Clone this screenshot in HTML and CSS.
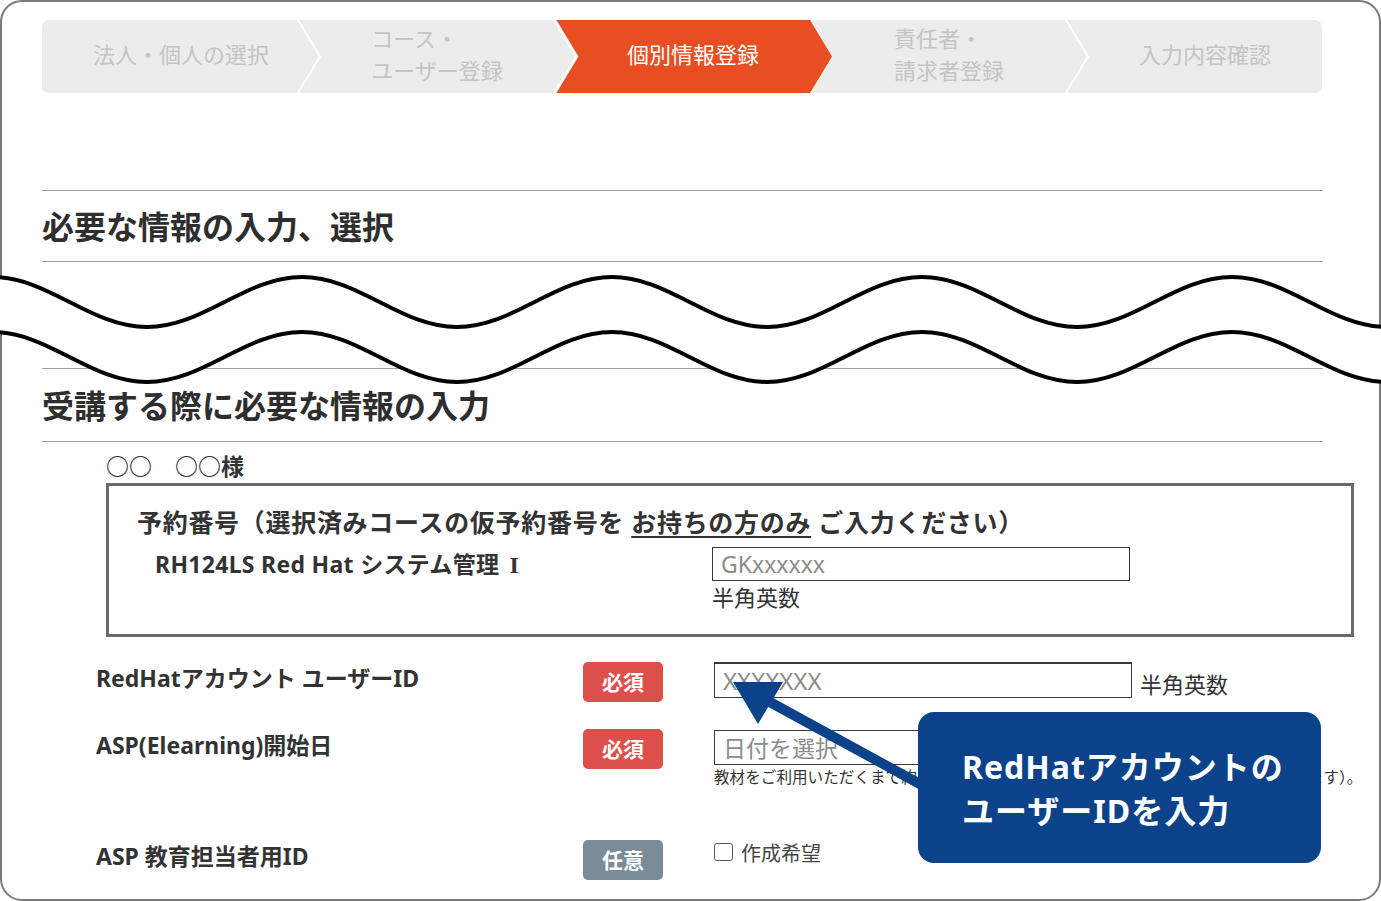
FILE: index.html
```html
<!DOCTYPE html>
<html lang="ja">
<head>
<meta charset="utf-8">
<title>個別情報登録</title>
<link rel="stylesheet" href="styles.css">
</head>
<body>
<div class="frame">
  <nav class="steps">
    <div class="step"><span class="step-label">法人・個人の選択</span></div>
    <div class="step">
      <svg class="sep" width="26" height="73" viewBox="0 0 26 73"><polyline points="1,0 23,36.5 1,73"/></svg>
      <span class="step-label two">コース・<br>ユーザー登録</span>
    </div>
    <div class="step active">
      <svg class="sep" width="26" height="73" viewBox="0 0 26 73"><polyline points="1,0 23,36.5 1,73"/></svg>
      <svg class="step-bg" width="280" height="73" viewBox="0 0 280 73"><polygon points="2.5,0 256,0 278,36.5 256,73 2.5,73 24.5,36.5"/></svg>
      <span class="step-label">個別情報登録</span>
    </div>
    <div class="step"><span class="step-label two">責任者・<br>請求者登録</span></div>
    <div class="step">
      <svg class="sep" width="26" height="73" viewBox="0 0 26 73"><polyline points="1,0 23,36.5 1,73"/></svg>
      <span class="step-label">入力内容確認</span>
    </div>
  </nav>

  <h2 class="sec-head">必要な情報の入力、選択</h2>
  <div class="omitted"></div>
  <h2 class="sec-head sec-second">受講する際に必要な情報の入力</h2>

  <p class="greeting">○○　○○様</p>

  <div class="resv-box">
    <p class="resv-title">予約番号（選択済みコースの仮予約番号を <span class="uline">お持ちの方のみ</span> ご入力ください）</p>
    <div class="resv-row">
      <div class="resv-course">RH124LS Red Hat システム管理 <span class="roman">I</span></div>
      <div class="resv-field">
        <input class="text-input" type="text" placeholder="GKxxxxxx">
        <div class="note">半角英数</div>
      </div>
    </div>
  </div>

  <div class="form-rows">
    <div class="form-row row-account">
      <div class="label">RedHatアカウント ユーザーID</div>
      <span class="badge req">必須</span>
      <div class="field field-inline">
        <input class="text-input row-input" type="text" placeholder="XXXXXXX">
        <span class="note side">半角英数</span>
      </div>
    </div>
    <div class="form-row row-date">
      <div class="label">ASP(Elearning)開始日</div>
      <span class="badge req">必須</span>
      <div class="field">
        <input class="text-input row-input date-input" type="text" placeholder="日付を選択">
        <div class="help">教材をご利用いただくまで約1週間かかります（開始日は申込日の1週間後以降となります）。</div>
      </div>
    </div>
    <div class="form-row row-admin">
      <div class="label">ASP 教育担当者用ID</div>
      <span class="badge opt">任意</span>
      <label class="field check">
        <input class="checkbox" type="checkbox">
        <span>作成希望</span>
      </label>
    </div>
  </div>

  <svg class="waves" width="1381" height="130" viewBox="0 260 1381 130">
    <path class="band" d="M -163 327 C -106 327 -65 277 -8 277 S 90 327 147 327 S 245 277 302 277 S 400 327 457 327 S 555 277 612 277 S 710 327 767 327 S 865 277 922 277 S 1020 327 1077 327 S 1175 277 1232 277 S 1330 327 1387 327 S 1485 277 1542 277 L 1542 332 C 1485 332 1444 382 1387 382 S 1289 332 1232 332 S 1134 382 1077 382 S 979 332 922 332 S 824 382 767 382 S 669 332 612 332 S 514 382 457 382 S 359 332 302 332 S 204 382 147 382 S 49 332 -8 332 S -106 382 -163 382 Z"/>
    <path class="wave" d="M -163 327 C -106 327 -65 277 -8 277 S 90 327 147 327 S 245 277 302 277 S 400 327 457 327 S 555 277 612 277 S 710 327 767 327 S 865 277 922 277 S 1020 327 1077 327 S 1175 277 1232 277 S 1330 327 1387 327 S 1485 277 1542 277"/>
    <path class="wave" d="M -163 382 C -106 382 -65 332 -8 332 S 90 382 147 382 S 245 332 302 332 S 400 382 457 382 S 555 332 612 332 S 710 382 767 382 S 865 332 922 332 S 1020 382 1077 382 S 1175 332 1232 332 S 1330 382 1387 382 S 1485 332 1542 332"/>
  </svg>

  <svg class="pointer" width="240" height="150" viewBox="700 660 240 150">
    <line x1="768" y1="701" x2="940" y2="795"/>
    <polygon points="733,682 783,682 758,724"/>
  </svg>

  <div class="callout">RedHatアカウントの<br>ユーザーIDを入力</div>
</div>
</body>
</html>
```

FILE: styles.css
```css
* { box-sizing: border-box; }

html, body {
  margin: 0;
  padding: 0;
  background: #fff;
}

body {
  font-family: "Noto Sans", "Noto Sans CJK JP", sans-serif;
  color: #333;
}

.frame {
  position: relative;
  width: 1381px;
  height: 901px;
  border: 2px solid #7a7a7a;
  border-radius: 22px;
  padding: 18px 0 0 40px;
  background: #fff;
}

/* ---------- steps ---------- */
.steps {
  display: flex;
  width: 1280px;
  height: 73px;
  background: #ececec;
  border-radius: 7px;
}

.step {
  position: relative;
  width: 256px;
  height: 73px;
  padding-left: 22px;
  padding-bottom: 7px;
  display: flex;
  align-items: center;
  justify-content: center;
}

.step-label {
  position: relative;
  z-index: 1;
  font-family: "Noto Sans CJK JP", sans-serif;
  font-size: 22px;
  line-height: 32px;
  color: #c4c4c4;
  white-space: nowrap;
}

.step-label.two {
  text-align: left;
  padding-top: 0;
}

.step.active .step-label { color: #fff; }

.sep {
  position: absolute;
  left: -1px;
  top: 0;
}

.sep polyline {
  fill: none;
  stroke: #fff;
  stroke-width: 2;
}

.step-bg {
  position: absolute;
  left: 0;
  top: 0;
  overflow: visible;
}

.step-bg polygon { fill: #e94e22; }

/* ---------- section headings ---------- */
.sec-head {
  margin: 97px 0 0;
  width: 1281px;
  height: 72px;
  border-top: 1px solid #a0a0a0;
  border-bottom: 1px solid #a0a0a0;
  display: flex;
  align-items: center;
  padding-top: 0;
  padding-bottom: 2px;
  font-family: "Noto Sans CJK JP", sans-serif;
  font-size: 32px;
  font-weight: 700;
  color: #2e2e2e;
  letter-spacing: 0;
}

.sec-second {
  margin-top: 0;
  height: 74px;
}

.omitted { height: 106px; }

.greeting {
  margin: 0 0 0 64px;
  height: 41px;
  padding-top: 8px;
  font-family: "Noto Sans CJK JP", sans-serif;
  font-size: 23px;
  line-height: 30px;
  font-weight: 700;
  color: #333;
}

/* ---------- reservation box ---------- */
.resv-box {
  margin-left: 64px;
  width: 1248px;
  height: 154px;
  border: 3px solid #6a6a6a;
  padding: 19px 0 0 28px;
}

.resv-title {
  margin: 0;
  font-size: 25px;
  line-height: 34px;
  font-weight: 700;
  color: #333;
  white-space: nowrap;
  letter-spacing: 0.7px;
}

.uline {
  text-decoration: underline;
  text-decoration-thickness: 2px;
  text-underline-offset: 4px;
}

.resv-row {
  display: flex;
  margin-top: 8px;
}

.resv-course {
  width: 575px;
  padding-left: 18px;
  font-size: 23px;
  line-height: 34px;
  font-weight: 700;
  letter-spacing: 0.3px;
  white-space: nowrap;
}

.roman {
  font-family: "Liberation Serif", serif;
  font-size: 24px;
  margin-left: 4px;
}

.text-input {
  display: block;
  width: 418px;
  height: 34px;
  margin: 0;
  border: 1px solid #3a3a3a;
  border-radius: 0;
  padding: 0 8px;
  font-family: "Noto Sans", "Noto Sans CJK JP", sans-serif;
  font-size: 23px;
  color: #333;
  background: #fff;
  outline: none;
}

.text-input::placeholder { color: #8c8c8c; }

.note {
  font-family: "Noto Sans CJK JP", sans-serif;
  font-size: 22px;
  line-height: 30px;
  color: #333;
}

/* ---------- form rows ---------- */
.form-rows {
  margin: 25px 0 0 54px;
}

.form-row {
  display: flex;
  align-items: flex-start;
}

.row-account { height: 67px; }
.row-date { height: 111px; }

.label {
  width: 487px;
  font-size: 23px;
  line-height: 32px;
  font-weight: 700;
  color: #333;
  white-space: nowrap;
}

.badge {
  width: 80px;
  height: 40px;
  border-radius: 5px;
  display: flex;
  align-items: center;
  justify-content: center;
  padding-bottom: 3px;
  font-family: "Noto Sans CJK JP", sans-serif;
  font-size: 21px;
  font-weight: 700;
  color: #fff;
}

.badge.req { background: #dc4f4b; }
.badge.opt { background: #7b8c99; }

.field { margin-left: 51px; }

.field-inline {
  display: flex;
  align-items: flex-start;
}

.row-input {
  height: 36px;
  border-top-width: 2px;
  font-size: 24px;
}

.date-input {
  height: 35px;
  margin-top: 1px;
  border-top-width: 1px;
  font-size: 23px;
}

.note.side {
  margin-left: 8px;
  padding-top: 3px;
  line-height: 36px;
}

.help {
  margin-top: 1px;
  font-family: "Noto Sans CJK JP", sans-serif;
  font-size: 15.6px;
  line-height: 20px;
  color: #333;
  white-space: nowrap;
}

.check {
  display: flex;
  align-items: flex-start;
  gap: 8px;
  font-family: "Noto Sans CJK JP", sans-serif;
  font-size: 20px;
  line-height: 26px;
  color: #444;
}

.checkbox {
  appearance: none;
  -webkit-appearance: none;
  margin: 3px 0 0;
  width: 19px;
  height: 18px;
  border: 1.5px solid #555;
  border-radius: 3px;
  background: #fff;
}

/* ---------- overlays ---------- */
.waves {
  position: absolute;
  left: -2px;
  top: 258px;
  overflow: visible;
}

.waves .band { fill: #fff; }

.waves .wave {
  fill: none;
  stroke: #000;
  stroke-width: 4;
}

.pointer {
  position: absolute;
  left: 698px;
  top: 658px;
  overflow: visible;
}

.pointer line {
  stroke: #0b428a;
  stroke-width: 10;
}

.pointer polygon { fill: #0b428a; }

.callout {
  position: absolute;
  left: 916px;
  top: 710px;
  width: 403px;
  height: 151px;
  border-radius: 16px;
  background: #0b428a;
  padding: 33px 0 0 44px;
  font-size: 32px;
  line-height: 44px;
  font-weight: 700;
  letter-spacing: 1px;
  color: #fff;
  white-space: nowrap;
}
```
